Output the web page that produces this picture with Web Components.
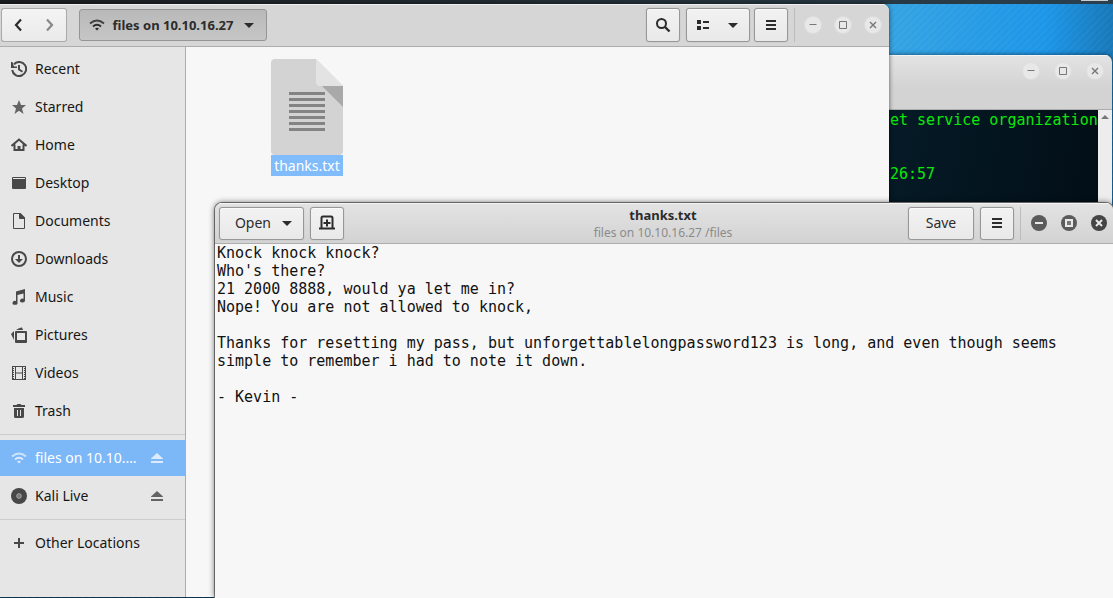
<!DOCTYPE html>
<html lang="en">
<head>
<meta charset="utf-8">
<title>Desktop</title>
<style>
html,body{margin:0;height:100%}
body{font:14px/20px "Noto Sans","Open Sans",sans-serif;color:#1a1a1a;overflow:hidden}
</style>
</head>
<body>
<desk-top>
  <terminal-window></terminal-window>
  <files-window></files-window>
  <editor-window></editor-window>
</desk-top>
<script>
const ICONS = {
  back:'<path d="M11 2.500 6 8l5 5.500" fill="none" stroke="currentColor" stroke-width="2.200"/>',
  forward:'<path d="m5 2.500 5 5.500-5 5.500" fill="none" stroke="currentColor" stroke-width="2.200"/>',
  wifi:'<g fill="none" stroke="currentColor" stroke-width="2"><path d="M1 6.500Q8 .5 15 6.500" opacity=".85"/><path d="M4 9.500q4-3.500 8 0"/></g><path d="M6 11.500q2-1.500 4 0L8 13.500z" fill="currentColor"/>',
  down:'<path d="M3 6h10l-5 5z" fill="currentColor"/>',
  search:'<circle cx="6.500" cy="6.500" r="4.500" fill="none" stroke="currentColor" stroke-width="2"/><path d="m10 10 4.500 4.500" stroke="currentColor" stroke-width="2.400"/>',
  list:'<path d="M2 3h4v4H2zM2 9h4v4H2zM8 4h6v2H8zM8 10h6v2H8z" fill="currentColor"/>',
  menu:'<path d="M3 3h10v2H3zM3 7h10v2H3zM3 11h10v2H3z" fill="currentColor"/>',
  recent:'<path d="M3 3.200A7 7 0 1 1 1.200 9" fill="none" stroke="currentColor" stroke-width="2"/><path d="M0 1v6h6V5.500H3L1.500 1zM7 4h2v4l3 2-1 1.500-4-2.500z" fill="currentColor"/>',
  star:'<path d="m8 1 2 5h5l-4 3.500L12.500 15 8 11.700 3.500 15 5 9.500 1 6h5z" fill="#636363"/>',
  home:'<path d="M.5 9 8 2.500 15.500 9M3.500 7.500V13h9V7.500" fill="none" stroke="currentColor" stroke-width="2"/><path d="M6.500 9h3v5h-3z" fill="currentColor"/>',
  desktop:'<path d="M1 3a1 1 0 0 1 1-1h12a1 1 0 0 1 1 1v10a1 1 0 0 1-1 1H2a1 1 0 0 1-1-1z" fill="currentColor"/><path d="M2 3.500h12" stroke="#e6e6e6"/>',
  document:'<path d="M2.500.5H9L13.500 5v10.500h-11z" fill="none" stroke="currentColor" stroke-linejoin="round"/><path d="M8 0h1.500L14 4.500V6H9a1 1 0 0 1-1-1z" fill="currentColor"/>',
  download:'<circle cx="8" cy="8" r="7" fill="none" stroke="currentColor" stroke-width="2"/><path d="M7 4h2v4h3l-4 4-4-4h3z" fill="currentColor"/>',
  music:'<path d="M5 2.500 14 0v11.500a2.500 2 0 1 1-1.500-1.800V4.500l-6 1.500v7.500A2.500 2 0 1 1 5 12z" fill="currentColor"/>',
  pictures:'<path fill-rule="evenodd" d="M5 4h10a1 1 0 0 1 1 1v10a1 1 0 0 1-1 1H5a1 1 0 0 1-1-1V5a1 1 0 0 1 1-1zm1 2v7h8V6z" fill="currentColor"/><path d="M5 3q4-3 6-2.500l1 2.500zM3 4v9L0 7z" fill="currentColor"/>',
  video:'<path d="M1.500 1v14M14.500 1v14M4.500 1v14M11.500 1v14M1 1.500h14M1 14.500h14M4 8h8" fill="none" stroke="currentColor"/><path d="M2.500 3v11M13.500 3v11" stroke="currentColor" stroke-dasharray="1 1"/>',
  trash:'<path d="M2 2h3.500l1-1h3l1 1H14v2H2zM3 5h10v8.500A1.500 1.500 0 0 1 11.500 15h-7A1.500 1.500 0 0 1 3 13.500z" fill="currentColor"/><path d="M6.500 7v6M9.500 7v6" stroke="#e6e6e6"/>',
  eject:'<path d="M2 8.500 8 3l6 5.500V9H2zM2 11h12v2H2z" fill="currentColor"/>',
  disc:'<circle cx="8" cy="8" r="8" fill="currentColor"/><circle cx="8" cy="8" r="2.200" fill="none" stroke="#c4c4c4"/><circle cx="8" cy="8" r=".8" fill="#c4c4c4"/>',
  plus:'<path d="M7 3h2v4h4v2H9v4H7V9H3V7h4z" fill="currentColor"/>',
  newtab:'<path d="M2.500 13V3A1.500 1.500 0 0 1 4 1.500h8A1.500 1.500 0 0 1 13.500 3v10" fill="none" stroke="currentColor" stroke-width="2"/><path d="M0 12.500h16v2H0zM7 4.500h2v2.500h2.500v2H9v2.500H7V9H4.500V7H7z" fill="currentColor"/>',
  minimize:'<path class="glyph" d="M4.500 7.500h7" stroke="currentColor"/>',
  maximize:'<path class="glyph" d="M4.500 4.500h7v7h-7z" fill="none" stroke="currentColor"/>',
  minimizeBold:'<path d="M4 7h8v2H4z" fill="currentColor"/>',
  maximizeBold:'<path d="M5 5h6v6H5z" fill="#777" stroke="currentColor" stroke-width="2"/>',
  close:'<path class="cross" d="m5 5 6 6m0-6-6 6" stroke="currentColor"/>',
  up:'<path d="M4 9h8L8 5z" fill="currentColor"/>'
};
function define(name, html, setup){
  customElements.define(name, class extends HTMLElement{
    constructor(){
      super();
      this.attachShadow({mode:'open'}).innerHTML = html;
    }
    connectedCallback(){ if(setup) setup(this, this.shadowRoot); }
  });
}

define('sym-icon','<style>:host{display:block;width:16px;height:16px;flex:none}svg{display:block}.cross{stroke-width:var(--cross,1)}</style><svg viewBox="0 0 16 16" width="16" height="16" aria-hidden="true"></svg>',
  (el,root)=>{ root.querySelector('svg').innerHTML = ICONS[el.getAttribute('name')]; });

define('tool-button',`<style>
:host{display:flex;height:34px}
button{flex:1;display:flex;align-items:center;justify-content:center;gap:var(--gap,14px);padding:0 8px;margin:0;white-space:nowrap;
 font:inherit;color:inherit;border:1px solid #979797;border-radius:3px;background:linear-gradient(#f2f2f2,#e9e9e9);box-shadow:0 0 1px #999,inset 0 1px #fafafa}
:host([pressed]) button{background:linear-gradient(#b9b9b9,#c6c6c6);box-shadow:none;border-color:#959595}
:host([end]) button{justify-content:flex-end}
</style><button type="button"><slot></slot></button>`,
 (el,root)=>{ if(el.title) root.querySelector('button').setAttribute('aria-label',el.title); });

define('window-controls',`<style>
:host{display:flex;gap:var(--spread,14px);color:#777;--cross:1.4}
button{width:16px;height:16px;padding:0;border:0;border-radius:50%;background:#e8e8e8;color:inherit;box-shadow:0 0 1px 1px #dedede}
:host([active]){color:#e8e8e8;--cross:2}
:host([active]) button{background:#5b5b5b;box-shadow:none}
:host([active]) button:last-child{background:#454545}
</style>
<button aria-label="Minimize"></button>
<button aria-label="Maximize"></button>
<button aria-label="Close"></button>`,
 (el,root)=>{
  const names = el.hasAttribute('active') ? ['minimizeBold','maximizeBold','close'] : ['minimize','maximize','close'];
  root.querySelectorAll('button').forEach((b,i)=>{ b.innerHTML=`<sym-icon name="${names[i]}"></sym-icon>`; });
 });

define('place-row',`<style>
:host{display:block}
a{display:flex;align-items:center;gap:8px;height:36px;padding:0 20px 0 11px;color:#161616;text-decoration:none}
sym-icon{color:#484848}
sym-icon:last-child{color:#636363}
span{flex:1;white-space:nowrap}
:host([selected]) a{background:#7cb7f7;color:#fff}
:host([selected]) sym-icon{color:#dcebfd}
</style><a href="#"><sym-icon id="lead"></sym-icon><span><slot></slot></span></a>`,
 (el,root)=>{
  const lead=document.createElement('sym-icon'); lead.setAttribute('name',el.getAttribute('icon'));
  root.getElementById('lead').replaceWith(lead);
  if(el.hasAttribute('eject')){
    const e=document.createElement('sym-icon'); e.setAttribute('name','eject');
    root.querySelector('a').append(e);
  }
 });

define('file-item',`<style>
:host{display:flex;flex-direction:column;align-items:center;width:72px}
svg{display:block}
span{box-sizing:border-box;width:100%;text-align:center;line-height:21px;background:#80bbfb;color:#fff}
</style>
<svg width="72" height="96" viewBox="0 0 72 96" aria-hidden="true">
<path d="M4 0h41l27 27v65a4 4 0 0 1-4 4H4a4 4 0 0 1-4-4V4a4 4 0 0 1 4-4z" fill="#d3d3d3"/>
<path d="M51 27h21v21z" fill="#a9a9a9"/><path d="M45 0l27 27H49a4 4 0 0 1-4-4z" fill="#e3e3e3"/>
<path d="M18 34.500h36M18 40.500h36M18 46.500h36M18 52.500h36M18 58.500h36M18 64.500h36M18 70.500h36" stroke="#848484" stroke-width="3"/></svg>
<span><slot></slot></span>`);

define('files-window',`<style>
:host{display:flex;flex-direction:column;background:#f7f7f7;border-radius:0 7px 0 0;overflow:hidden;box-shadow:0 0 5px #0009}
header{display:flex;align-items:center;gap:6px;height:42px;padding:0 8px 0 1px;border-bottom:1px solid #adadad;background:#d6d6d6;box-shadow:inset 0 1px #f0f0f0;color:#2c2c2c}
.nav{display:flex;margin-right:6px}
.nav button{width:33px;height:34px;padding:0 8px;border:1px solid #aaa;background:linear-gradient(#f4f4f4,#eaeaea);color:#2c2c2c}
.nav button:first-child{border-right:0;border-radius:3px 0 0 3px}
.nav button:last-child{border-left:0;border-radius:0 3px 3px 0;color:#888}
.path{width:188px;height:32px;font-size:13px;font-weight:bold;--gap:8px}
.grow{flex:1}
.sq{width:34px}.view{width:62px}
i{width:1px;height:34px;background:#bcbcbc}
window-controls{margin-left:4px}
.body{flex:1;display:flex;min-height:0}
nav{box-sizing:border-box;width:186px;flex:none;display:flex;flex-direction:column;gap:2px;padding-top:4px;background:#e6e6e6;border-right:1px solid #adadad}
hr{width:100%;height:1px;margin:3px 0;border:0;background:#cdcdcd}
main{flex:1;padding:12px 85px}
</style>
<header>
<div class="nav"><button aria-label="Back"><sym-icon name="back"></sym-icon></button><button aria-label="Forward"><sym-icon name="forward"></sym-icon></button></div>
<tool-button class="path" pressed><sym-icon name="wifi"></sym-icon><span>files on 10.10.16.27</span><sym-icon name="down"></sym-icon></tool-button>
<div class="grow"></div>
<tool-button class="sq" title="Search"><sym-icon name="search"></sym-icon></tool-button>
<tool-button class="view" title="View"><sym-icon name="list"></sym-icon><sym-icon name="down"></sym-icon></tool-button>
<tool-button class="sq" title="Menu"><sym-icon name="menu"></sym-icon></tool-button>
<i></i>
<window-controls></window-controls>
</header>
<div class="body">
<nav>
<place-row icon="recent">Recent</place-row>
<place-row icon="star">Starred</place-row>
<place-row icon="home">Home</place-row>
<place-row icon="desktop">Desktop</place-row>
<place-row icon="document">Documents</place-row>
<place-row icon="download">Downloads</place-row>
<place-row icon="music">Music</place-row>
<place-row icon="pictures">Pictures</place-row>
<place-row icon="video">Videos</place-row>
<place-row icon="trash">Trash</place-row>
<hr>
<place-row icon="wifi" selected eject>files on 10.10.…</place-row>
<place-row icon="disc" eject>Kali Live</place-row>
<hr>
<place-row icon="plus">Other Locations</place-row>
</nav>
<main><file-item>thanks.txt</file-item></main>
</div>`);

define('terminal-window',`<style>
:host{display:flex;flex-direction:column;border-radius:0 7px 0 0;overflow:hidden;box-shadow:0 0 5px #0009}
header{display:flex;justify-content:flex-end;height:46px;padding:8px 9px 0;border-bottom:1px solid #adadad;background:linear-gradient(#e3e3e3,#d3d3d3 60%);box-shadow:inset 0 1px #f4f4f4;--spread:16px}
.body{flex:1;display:flex;background:linear-gradient(100deg,#051b27,#020d15)}
pre{flex:1;margin:0;padding:1px 0 0 1px;font:15px/18px "DejaVu Sans Mono",monospace;color:#0be80b;overflow:hidden}
aside{width:14px;background:#ededed;color:#777}
aside sym-icon{margin-left:-1px}
</style>
<header><window-controls></window-controls></header>
<div class="body"><pre>et service organization


26:57</pre><aside><sym-icon name="up"></sym-icon></aside></div>`);

define('editor-window',`<style>
:host{display:flex;flex-direction:column;background:#f7f7f7;border-radius:7px 7px 0 0;overflow:hidden;box-shadow:0 0 6px #000a,0 0 0 1px #8e8e8e}
header{display:grid;grid-template-columns:1fr auto 1fr;align-items:center;height:40px;padding:0 6px 0 4px;border-bottom:1px solid #adadad;background:linear-gradient(#e3e3e3,#d3d3d3);box-shadow:inset 0 1px #f4f4f4;color:#2c2c2c}
.side{display:flex;align-items:center;gap:6px}
.end{justify-content:flex-end}
tool-button{height:33px}
.open{width:85px;--gap:8px}.sq{width:34px}.save{width:66px}
.title{text-align:center}
h1{margin:0;font-size:13px;line-height:20px}
p{margin:0;font-size:12px;line-height:16px;color:#8b8b8b}
i{width:1px;height:33px;background:#bcbcbc}
window-controls{margin-left:4px}
textarea{flex:1;box-sizing:border-box;width:100%;border:0;outline:0;resize:none;margin:0;padding:0 0 0 2px;background:#f7f7f7;color:#111;font:15px/18px "DejaVu Sans Mono",monospace;overflow:hidden}
</style>
<header>
<div class="side"><tool-button class="open" end><span>Open</span><sym-icon name="down"></sym-icon></tool-button><tool-button class="sq" title="New document"><sym-icon name="newtab"></sym-icon></tool-button></div>
<div class="title"><h1>thanks.txt</h1><p>files on 10.10.16.27 /files</p></div>
<div class="side end"><tool-button class="save">Save</tool-button><tool-button class="sq" title="Menu"><sym-icon name="menu"></sym-icon></tool-button><i></i><window-controls active></window-controls></div>
</header>
<textarea aria-label="Document text" spellcheck="false">Knock knock knock?
Who's there?
21 2000 8888, would ya let me in?
Nope! You are not allowed to knock,

Thanks for resetting my pass, but unforgettablelongpassword123 is long, and even though seems simple to remember i had to note it down.

- Kevin -</textarea>`);

define('desk-top',`<style>
:host{display:block;position:relative;height:100vh;overflow:hidden;background:repeating-linear-gradient(135deg,#ffffff08 0 2px,transparent 2px 5px),linear-gradient(90deg,#0d4568 60%,#35a3e2 80%,#1d96e8 94%,#1878b8)}
.bar{display:flex;justify-content:flex-end;height:4px;padding-right:5px;background:linear-gradient(90deg,#1d1e20,#2a404e)}
.bar b{width:27px;height:1px;background:#ccc}
::slotted(*){position:absolute}
::slotted(terminal-window){left:calc(100% - 224px);right:1px;top:55px;height:180px}
::slotted(files-window){left:0;right:224px;top:4px;bottom:1px}
::slotted(editor-window){left:215px;right:0;top:203px;bottom:0}
</style><div class="bar"><b></b></div><slot></slot>`);
</script>
</body>
</html>
